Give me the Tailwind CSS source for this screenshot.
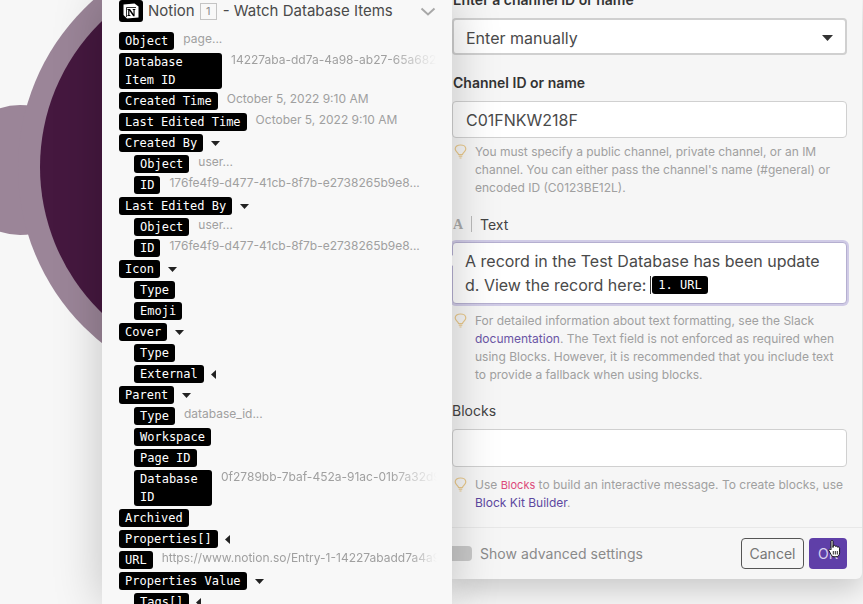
<!DOCTYPE html>
<html lang="en">
<head>
<meta charset="utf-8"/>
<meta content="width=device-width, initial-scale=1.0" name="viewport"/>
<title>Notion to Slack mapping</title>
<script src="https://cdn.jsdelivr.net/npm/@tailwindcss/browser@4"></script>
</head>
<body class="relative h-[604px] w-[863px] overflow-hidden bg-[#f7f7f7] font-['Inter',sans-serif]">

<!-- module bubble behind the panels -->
<svg class="absolute left-0 top-0" width="110" height="360" viewBox="0 0 110 360">
  <circle cx="20" cy="170" r="65" fill="#9b8598"/>
  <circle cx="243" cy="168" r="225" fill="#9b8598"/>
  <circle cx="243" cy="167" r="203" fill="#45183f"/>
</svg>

<div class="absolute inset-0 flex items-start pl-[102px]">

  <!-- mapping panel -->
  <div class="relative z-10 h-[604px] w-[350px] shrink-0 overflow-hidden bg-[#f8f8f8] pl-[17px] pr-[15px] shadow-[0_0_45px_rgba(0,0,0,0.22)]">
    <div class="mb-[10px] flex h-[22px] items-center text-[15px] text-[#4a4a4a]">
      <svg class="mr-[5px] shrink-0" width="24" height="22" viewBox="0 0 24 22">
        <rect width="24" height="22" rx="3" fill="#000"/>
        <path d="M4.5 4.5 15.5 3.5 19.5 6.5V17.5L8 18.5 4.5 15Z" fill="#fff"/>
        <path d="M7.5 7.5H17M7.5 7.5V17" fill="none" stroke="#000" stroke-width="0.8"/>
        <path d="M8.5 9H11L14.5 14V10H13.7V9H16.3V10H15.6V16.3H14.2L10.4 10.8V15H11.4V16H8.5V15H9.2V10H8.5Z" fill="#000"/>
      </svg>
      <span>Notion</span>
      <span class="ml-[5px] mr-[6px] flex h-[17px] w-[17px] items-center justify-center border border-[#c4c4c4] text-[11px] text-[#8a8a8a]">1</span>
      <span>- Watch Database Items</span>
      <svg class="ml-auto mr-px shrink-0" width="16" height="9" viewBox="0 0 16 9"><path d="M1.5 1.5 8 7.5 14.5 1.5" fill="none" stroke="#a8a8a8" stroke-width="2"/></svg>
    </div>

    <div class="flex flex-col gap-[3px]">
      <div class="flex items-start gap-[9px]"><span class="rounded-[3px] bg-black px-[6px] font-['DejaVu_Sans_Mono',monospace] text-[12px] leading-[18px] text-white">Object</span><span class="text-[12px] leading-[14px] text-[#a0a0a0]">page...</span></div>
      <div class="flex items-start gap-[9px]"><span class="w-[103px] shrink-0 rounded-[3px] bg-black px-[6px] font-['DejaVu_Sans_Mono',monospace] text-[12px] leading-[18px] text-white">Database Item ID</span><span class="overflow-hidden whitespace-nowrap text-[12px] leading-[14px] text-[#a0a0a0] [mask-image:linear-gradient(to_right,black_78%,transparent)]">14227aba-dd7a-4a98-ab27-65a682b4c1</span></div>
      <div class="flex items-start gap-[9px]"><span class="rounded-[3px] bg-black px-[6px] font-['DejaVu_Sans_Mono',monospace] text-[12px] leading-[18px] text-white">Created Time</span><span class="text-[12px] leading-[14px] text-[#a0a0a0]">October 5, 2022 9:10 AM</span></div>
      <div class="flex items-start gap-[9px]"><span class="rounded-[3px] bg-black px-[6px] font-['DejaVu_Sans_Mono',monospace] text-[12px] leading-[18px] text-white">Last Edited Time</span><span class="text-[12px] leading-[14px] text-[#a0a0a0]">October 5, 2022 9:10 AM</span></div>
      <div class="flex items-center gap-[8px]"><span class="rounded-[3px] bg-black px-[6px] font-['DejaVu_Sans_Mono',monospace] text-[12px] leading-[18px] text-white">Created By</span><svg width="9" height="5" viewBox="0 0 9 5"><path d="M0 0H9L4.5 5Z" fill="#222"/></svg></div>
      <div class="flex items-start gap-[9px] pl-[15px]"><span class="rounded-[3px] bg-black px-[6px] font-['DejaVu_Sans_Mono',monospace] text-[12px] leading-[18px] text-white">Object</span><span class="text-[12px] leading-[14px] text-[#a0a0a0]">user...</span></div>
      <div class="flex items-start gap-[9px] pl-[15px]"><span class="rounded-[3px] bg-black px-[6px] font-['DejaVu_Sans_Mono',monospace] text-[12px] leading-[18px] text-white">ID</span><span class="text-[12px] leading-[14px] text-[#a0a0a0]">176fe4f9-d477-41cb-8f7b-e2738265b9e8...</span></div>
      <div class="flex items-center gap-[8px]"><span class="rounded-[3px] bg-black px-[6px] font-['DejaVu_Sans_Mono',monospace] text-[12px] leading-[18px] text-white">Last Edited By</span><svg width="9" height="5" viewBox="0 0 9 5"><path d="M0 0H9L4.5 5Z" fill="#222"/></svg></div>
      <div class="flex items-start gap-[9px] pl-[15px]"><span class="rounded-[3px] bg-black px-[6px] font-['DejaVu_Sans_Mono',monospace] text-[12px] leading-[18px] text-white">Object</span><span class="text-[12px] leading-[14px] text-[#a0a0a0]">user...</span></div>
      <div class="flex items-start gap-[9px] pl-[15px]"><span class="rounded-[3px] bg-black px-[6px] font-['DejaVu_Sans_Mono',monospace] text-[12px] leading-[18px] text-white">ID</span><span class="text-[12px] leading-[14px] text-[#a0a0a0]">176fe4f9-d477-41cb-8f7b-e2738265b9e8...</span></div>
      <div class="flex items-center gap-[8px]"><span class="rounded-[3px] bg-black px-[6px] font-['DejaVu_Sans_Mono',monospace] text-[12px] leading-[18px] text-white">Icon</span><svg width="9" height="5" viewBox="0 0 9 5"><path d="M0 0H9L4.5 5Z" fill="#222"/></svg></div>
      <div class="flex items-start pl-[15px]"><span class="rounded-[3px] bg-black px-[6px] font-['DejaVu_Sans_Mono',monospace] text-[12px] leading-[18px] text-white">Type</span></div>
      <div class="flex items-start pl-[15px]"><span class="rounded-[3px] bg-black px-[6px] font-['DejaVu_Sans_Mono',monospace] text-[12px] leading-[18px] text-white">Emoji</span></div>
      <div class="flex items-center gap-[8px]"><span class="rounded-[3px] bg-black px-[6px] font-['DejaVu_Sans_Mono',monospace] text-[12px] leading-[18px] text-white">Cover</span><svg width="9" height="5" viewBox="0 0 9 5"><path d="M0 0H9L4.5 5Z" fill="#222"/></svg></div>
      <div class="flex items-start pl-[15px]"><span class="rounded-[3px] bg-black px-[6px] font-['DejaVu_Sans_Mono',monospace] text-[12px] leading-[18px] text-white">Type</span></div>
      <div class="flex items-center gap-[7px] pl-[15px]"><span class="rounded-[3px] bg-black px-[6px] font-['DejaVu_Sans_Mono',monospace] text-[12px] leading-[18px] text-white">External</span><svg width="5" height="9" viewBox="0 0 5 9"><path d="M5 0V9L0 4.5Z" fill="#222"/></svg></div>
      <div class="flex items-center gap-[8px]"><span class="rounded-[3px] bg-black px-[6px] font-['DejaVu_Sans_Mono',monospace] text-[12px] leading-[18px] text-white">Parent</span><svg width="9" height="5" viewBox="0 0 9 5"><path d="M0 0H9L4.5 5Z" fill="#222"/></svg></div>
      <div class="flex items-start gap-[9px] pl-[15px]"><span class="rounded-[3px] bg-black px-[6px] font-['DejaVu_Sans_Mono',monospace] text-[12px] leading-[18px] text-white">Type</span><span class="text-[12px] leading-[14px] text-[#a0a0a0]">database_id...</span></div>
      <div class="flex items-start pl-[15px]"><span class="rounded-[3px] bg-black px-[6px] font-['DejaVu_Sans_Mono',monospace] text-[12px] leading-[18px] text-white">Workspace</span></div>
      <div class="flex items-start pl-[15px]"><span class="rounded-[3px] bg-black px-[6px] font-['DejaVu_Sans_Mono',monospace] text-[12px] leading-[18px] text-white">Page ID</span></div>
      <div class="flex items-start gap-[9px] pl-[15px]"><span class="w-[78px] shrink-0 rounded-[3px] bg-black px-[6px] font-['DejaVu_Sans_Mono',monospace] text-[12px] leading-[18px] text-white">Database ID</span><span class="overflow-hidden whitespace-nowrap text-[12px] leading-[14px] text-[#a0a0a0] [mask-image:linear-gradient(to_right,black_78%,transparent)]">0f2789bb-7baf-452a-91ac-01b7a32d9</span></div>
      <div class="flex items-start"><span class="rounded-[3px] bg-black px-[6px] font-['DejaVu_Sans_Mono',monospace] text-[12px] leading-[18px] text-white">Archived</span></div>
      <div class="flex items-center gap-[7px]"><span class="rounded-[3px] bg-black px-[6px] font-['DejaVu_Sans_Mono',monospace] text-[12px] leading-[18px] text-white">Properties[]</span><svg width="5" height="9" viewBox="0 0 5 9"><path d="M5 0V9L0 4.5Z" fill="#222"/></svg></div>
      <div class="flex items-start gap-[9px]"><span class="rounded-[3px] bg-black px-[6px] font-['DejaVu_Sans_Mono',monospace] text-[12px] leading-[18px] text-white">URL</span><span class="overflow-hidden whitespace-nowrap text-[12px] leading-[14px] text-[#a0a0a0] [mask-image:linear-gradient(to_right,black_90%,transparent)]">https://www.notion.so/Entry-1-14227abadd7a4a98ab27</span></div>
      <div class="flex items-center gap-[8px]"><span class="rounded-[3px] bg-black px-[6px] font-['DejaVu_Sans_Mono',monospace] text-[12px] leading-[18px] text-white">Properties Value</span><svg width="9" height="5" viewBox="0 0 9 5"><path d="M0 0H9L4.5 5Z" fill="#222"/></svg></div>
      <div class="flex items-center gap-[7px] pl-[15px]"><span class="rounded-[3px] bg-black px-[6px] font-['DejaVu_Sans_Mono',monospace] text-[12px] leading-[18px] text-white">Tags[]</span><svg width="5" height="9" viewBox="0 0 5 9"><path d="M5 0V9L0 4.5Z" fill="#222"/></svg></div>
    </div>
  </div>

  <!-- slack form panel -->
  <div class="flex h-[579px] w-[410px] shrink-0 flex-col overflow-hidden rounded-br-[6px] bg-[#f6f6f6] shadow-[0_10px_30px_rgba(0,0,0,0.2)]">
    <div class="flex flex-1 flex-col pr-[15px]">
      <div class="-mt-[9px] h-[18px] pl-px text-[14px] font-semibold leading-[18px] text-[#333]">Enter a channel ID or name</div>
      <div class="mt-[9px] flex h-[37px] items-center justify-between rounded-[4px] border-2 border-[#d0d0d0] bg-white pl-[12px] pr-[12px] pt-[2px] text-[16px] text-[#4a4a4a]">
        <span>Enter manually</span>
        <svg width="11" height="6" viewBox="0 0 11 6"><path d="M0 0H11L5.5 6Z" fill="#333"/></svg>
      </div>

      <div class="mt-[19px] h-[18px] pl-px text-[14px] font-semibold leading-[18px] text-[#333]">Channel ID or name</div>
      <div class="mt-[9px] flex h-[37px] items-center rounded-[4px] border border-[#d0d0d0] bg-white pl-[13px] text-[16px] text-[#4a4a4a]">C01FNKW218F</div>
      <div class="mt-[5px] flex gap-[8px] pl-[2px]">
        <svg class="mt-[1px] shrink-0" width="13" height="15" viewBox="0 0 13 15"><path d="M4.5 10.5C4.3 8.8 1.2 7.6 1.2 5 1.2 2.6 3.6 1 6.5 1S11.8 2.6 11.8 5C11.8 7.6 8.7 8.8 8.5 10.5ZM4.7 12.2H8.3M5.5 14H7.5" fill="none" stroke="#e9c98d" stroke-width="1.2"/></svg>
        <p class="whitespace-nowrap text-[12px] leading-[18px] text-[#a0a0a0]">You must specify a public channel, private channel, or an IM<br/>channel. You can either pass the channel's name (#general) or<br/>encoded ID (C0123BE12L).</p>
      </div>

      <div class="mt-[18px] flex h-[18px] items-center text-[14px] text-[#444]">
        <span class="w-[12px] pl-px font-['Liberation_Serif',serif] text-[14px] font-bold text-[#aaa]">A</span>
        <span class="ml-[7px] h-[16px] w-px bg-[#bbb]"></span>
        <span class="ml-[8px]">Text</span>
      </div>
      <div class="relative mt-[9px] h-[62px] rounded-[4px] border border-[#b5afd0] bg-white py-[6px] pl-[12px] pr-[8px] text-[16px] leading-[24px] text-[#4a4a4a] shadow-[0_0_0_2px_#d0cbe6]">
        <span class="absolute -left-[1px] top-[12px] h-[11px] w-[7px] bg-white [clip-path:polygon(0_0,100%_50%,0_100%)]"></span>
        <span class="block">A record in the Test Database has been update</span>
        <span class="flex items-center">d. View the record here:<span class="ml-[4px] mr-px h-[18px] w-px bg-[#333]"></span><span class="rounded-[3px] bg-black px-[6px] font-['DejaVu_Sans_Mono',monospace] text-[12px] leading-[18px] text-white">1. URL</span></span>
      </div>
      <div class="mt-[8px] flex gap-[8px] pl-[2px]">
        <svg class="mt-[1px] shrink-0" width="13" height="15" viewBox="0 0 13 15"><path d="M4.5 10.5C4.3 8.8 1.2 7.6 1.2 5 1.2 2.6 3.6 1 6.5 1S11.8 2.6 11.8 5C11.8 7.6 8.7 8.8 8.5 10.5ZM4.7 12.2H8.3M5.5 14H7.5" fill="none" stroke="#e9c98d" stroke-width="1.2"/></svg>
        <p class="whitespace-nowrap text-[12px] leading-[18px] text-[#a0a0a0]">For detailed information about text formatting, see the Slack<br/><span class="text-[#6a55a5]">documentation</span>. The Text field is not enforced as required when<br/>using Blocks. However, it is recommended that you include text<br/>to provide a fallback when using blocks.</p>
      </div>

      <div class="mt-[18px] h-[18px] text-[14px] leading-[18px] text-[#444]">Blocks</div>
      <div class="mt-[9px] h-[38px] rounded-[4px] border border-[#d0d0d0] bg-white"></div>
      <div class="mt-[9px] flex gap-[8px] pl-[2px]">
        <svg class="mt-[1px] shrink-0" width="13" height="15" viewBox="0 0 13 15"><path d="M4.5 10.5C4.3 8.8 1.2 7.6 1.2 5 1.2 2.6 3.6 1 6.5 1S11.8 2.6 11.8 5C11.8 7.6 8.7 8.8 8.5 10.5ZM4.7 12.2H8.3M5.5 14H7.5" fill="none" stroke="#e9c98d" stroke-width="1.2"/></svg>
        <p class="whitespace-nowrap text-[12px] leading-[18px] text-[#a0a0a0]">Use <span class="text-[11px] text-[#dd4a7a]">Blocks</span> to build an interactive message. To create blocks, use<br/><span class="text-[#5d48a0]">Block Kit Builder</span>.</p>
      </div>
    </div>

    <div class="flex h-[52px] shrink-0 items-center border-t border-[#e8e8e8] pr-[15px]">
      <span class="h-[15px] w-[20px] rounded-r-[4px] bg-[#c9c9c9]"></span>
      <span class="ml-[8px] text-[14px] tracking-[0.05px] text-[#8a8a8a]">Show advanced settings</span>
      <span class="ml-auto flex h-[31px] w-[63px] items-center justify-center rounded-[4px] border border-[#555] text-[14px] text-[#777]">Cancel</span>
      <span class="relative ml-[5px] flex h-[31px] w-[38px] items-center justify-center rounded-[4px] bg-[#5f3fa8] text-[14px] text-[#d8d0ee]">OK
        <svg class="absolute left-[19px] top-[2px]" width="14" height="18" viewBox="0 0 14 18"><path d="M3 1.3C3 .2 5 .2 5 1.3V7.5L5.2 5.6C6.2 5 7.2 5.4 7.3 6.3 8.2 5.8 9.2 6.2 9.3 7.1 10.4 6.6 11.5 7.2 11.6 8.2V12.8C11.6 15.2 10 16.8 8 16.8H6C4.4 16.8 3.7 15.8 2.9 14.3L.9 10.6C.4 9.4 1.9 8.5 3 9.9Z" fill="#fff" stroke="#111" stroke-width="1"/><path d="M5.3 11V14.5M7.3 11V14.5M9.3 11V14.5" fill="none" stroke="#111" stroke-width="0.9"/></svg>
      </span>
    </div>
  </div>
</div>
</body>
</html>
